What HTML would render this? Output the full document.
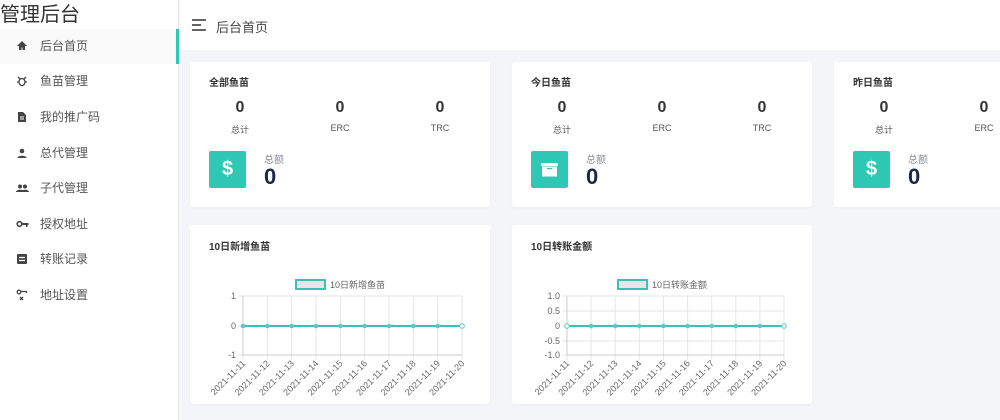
<!DOCTYPE html>
<html><head><meta charset="utf-8"><style>
*{margin:0;padding:0;box-sizing:border-box}
body{width:1000px;height:420px;overflow:hidden;background:#f4f5f9;font-family:"Liberation Sans","Noto Sans CJK SC",sans-serif;position:relative;color:#333}
.side{position:absolute;left:0;top:0;width:179px;height:420px;background:#fff;border-right:1px solid #e8e8e8}
.logo{position:absolute;left:0;top:2px;font-size:20px;color:#333;line-height:26px}
.item{position:absolute;left:0;width:179px;height:35px;font-size:12px;color:#555;line-height:35px}
.item.act{background:#fafafa;border-right:3px solid #2ec8b4}
.item span{position:absolute;left:40px}
.item svg{position:absolute;left:16px;top:11px}
.hdr{position:absolute;left:180px;top:0;width:820px;height:50px;background:#fff}
.card{position:absolute;background:#fff;border-radius:3px;box-shadow:0 1px 2px rgba(0,0,0,.04)}
.t{position:absolute;font-size:10px;font-weight:bold;color:#333}
.n{position:absolute;width:60px;text-align:center;font-size:16px;font-weight:bold;color:#333}
.l{position:absolute;width:60px;text-align:center;font-size:9px;color:#555}
.ib{position:absolute;width:37px;height:37px;background:#2ec8b4;border-radius:2px;color:#fff;font-weight:bold;font-size:20px;text-align:center;line-height:37px}
.zl{position:absolute;font-size:10px;color:#8a8f99}
.big{position:absolute;font-size:22px;font-weight:bold;color:#1c2748}
</style></head><body>
<div class="side">
<div class="logo">管理后台</div>
<div class="item act" style="top:29px"><svg width="12" height="12" viewBox="0 0 12 12"><path d="M6 1L1 6h2v4h2.5V7.5h1V10H9V6h2z" fill="#444"/></svg><span>后台首页</span></div>
<div class="item" style="top:64px"><svg width="12" height="12" viewBox="0 0 12 12"><g fill="none" stroke="#444" stroke-width="1.3"><ellipse cx="6" cy="7" rx="3" ry="3.5"/><path d="M2 2l2 2M10 2L8 4M1 7h2M9 7h2"/></g></svg><span>鱼苗管理</span></div>
<div class="item" style="top:100px"><svg width="12" height="12" viewBox="0 0 12 12"><path d="M2 1h5l3 3v7H2z" fill="#444"/><path d="M4 6h4M4 8h4" stroke="#fff"/></svg><span>我的推广码</span></div>
<div class="item" style="top:136px"><svg width="12" height="12" viewBox="0 0 12 12"><circle cx="6" cy="4" r="2.3" fill="#444"/><path d="M1.5 11c0-3 9-3 9 0z" fill="#444"/></svg><span>总代管理</span></div>
<div class="item" style="top:171px"><svg width="13" height="12" viewBox="0 0 13 12"><circle cx="4" cy="4.5" r="2" fill="#444"/><circle cx="9" cy="4.5" r="2" fill="#444"/><path d="M0 10c0-3 8-3 8 0zM5 10c0-3 8-3 8 0z" fill="#444"/></svg><span>子代管理</span></div>
<div class="item" style="top:207px"><svg width="13" height="12" viewBox="0 0 13 12"><circle cx="3.5" cy="6" r="2.3" fill="none" stroke="#444" stroke-width="1.6"/><path d="M5.5 5h7v2h-1v2h-1.5V7H5.5z" fill="#444"/></svg><span>授权地址</span></div>
<div class="item" style="top:242px"><svg width="12" height="12" viewBox="0 0 12 12"><rect x="1" y="1" width="10" height="10" rx="1" fill="#444"/><path d="M3 4.5h6M3 7.5h6" stroke="#fff" stroke-width="1.2"/></svg><span>转账记录</span></div>
<div class="item" style="top:278px"><svg width="12" height="12" viewBox="0 0 12 12"><circle cx="3" cy="3" r="1.8" fill="none" stroke="#444" stroke-width="1.3"/><path d="M4.5 2.5h6v1.5M4 8l3 3M7 8l-3 3" stroke="#444" stroke-width="1.3" fill="none"/></svg><span>地址设置</span></div>
</div>
<div class="hdr">
<svg style="position:absolute;left:12px;top:19px" width="15" height="12" viewBox="0 0 15 12"><path d="M0 1h14M0 6h9M0 11h14" stroke="#333" stroke-width="1.4"/></svg>
<div style="position:absolute;left:36px;top:17px;font-size:13px;color:#444">后台首页</div>
</div>

<div class="card" style="left:190px;top:62px;width:300px;height:145px">
<div class="t" style="left:19px;top:12px">全部鱼苗</div>
<div class="n" style="left:20px;top:37px">0</div><div class="n" style="left:120px;top:37px">0</div><div class="n" style="left:220px;top:37px">0</div>
<div class="l" style="left:20px;top:61px">总计</div><div class="l" style="left:120px;top:61px">ERC</div><div class="l" style="left:220px;top:61px">TRC</div>
<div class="ib" style="left:19px;top:89px">$</div>
<div class="zl" style="left:74px;top:89px">总额</div><div class="big" style="left:74px;top:102px">0</div>
</div>
<div class="card" style="left:512px;top:62px;width:300px;height:145px">
<div class="t" style="left:19px;top:12px">今日鱼苗</div>
<div class="n" style="left:20px;top:37px">0</div><div class="n" style="left:120px;top:37px">0</div><div class="n" style="left:220px;top:37px">0</div>
<div class="l" style="left:20px;top:61px">总计</div><div class="l" style="left:120px;top:61px">ERC</div><div class="l" style="left:220px;top:61px">TRC</div>
<div class="ib" style="left:19px;top:89px"><svg width="37" height="37" viewBox="0 0 37 37"><rect x="10" y="12" width="17" height="3" fill="#fff"/><rect x="11" y="15.5" width="15" height="10" fill="#fff"/><rect x="16" y="17" width="5" height="1.2" fill="#2ec8b4"/></svg></div>
<div class="zl" style="left:74px;top:89px">总额</div><div class="big" style="left:74px;top:102px">0</div>
</div>
<div class="card" style="left:834px;top:62px;width:200px;height:145px">
<div class="t" style="left:19px;top:12px">昨日鱼苗</div>
<div class="n" style="left:20px;top:37px">0</div><div class="n" style="left:120px;top:37px">0</div>
<div class="l" style="left:20px;top:61px">总计</div><div class="l" style="left:120px;top:61px">ERC</div>
<div class="ib" style="left:19px;top:89px">$</div>
<div class="zl" style="left:74px;top:89px">总额</div><div class="big" style="left:74px;top:102px">0</div>
</div>

<div class="card" style="left:190px;top:225px;width:300px;height:179px"><div class="t" style="left:19px;top:13px">10日新增鱼苗</div></div>
<div class="card" style="left:512px;top:225px;width:300px;height:179px"><div class="t" style="left:19px;top:13px">10日转账金额</div></div>

<svg style="position:absolute;left:0;top:0" width="1000" height="420" font-family="Liberation Sans,sans-serif" font-size="9" fill="#666">
<g>
<rect x="296" y="280" width="29" height="9" fill="#e6e6e6" stroke="#3cbfb6" stroke-width="2"/>
<text x="330" y="288" fill="#666">10日新增鱼苗</text>
<g stroke="#e6e6e6" stroke-width="1">
<path d="M243 296H462M243 326H462M243 355H462"/>
<path d="M243 296V360M267.3 296V360M291.7 296V360M316 296V360M340.3 296V360M364.7 296V360M389 296V360M413.3 296V360M437.7 296V360M462 296V360"/>
<path d="M238 296H243M238 326H243M238 355H243"/>
</g>
<path d="M243 296V355H462" stroke="#ccc" fill="none"/>
<text x="236" y="299" text-anchor="end">1</text><text x="236" y="329" text-anchor="end">0</text><text x="236" y="358" text-anchor="end">-1</text>
<path d="M243 326H462" stroke="#3cbfb6" stroke-width="2"/>
<g fill="#5cc9c0"><circle cx="243" cy="326" r="2.3"/><circle cx="267.3" cy="326" r="2.3"/><circle cx="291.7" cy="326" r="2.3"/><circle cx="316" cy="326" r="2.3"/><circle cx="340.3" cy="326" r="2.3"/><circle cx="364.7" cy="326" r="2.3"/><circle cx="389" cy="326" r="2.3"/><circle cx="413.3" cy="326" r="2.3"/><circle cx="437.7" cy="326" r="2.3"/><circle cx="462" cy="326" r="2.3" fill="#fff" stroke="#5cc9c0"/></g>
<g text-anchor="end">
<text transform="translate(246,364) rotate(-45)">2021-11-11</text><text transform="translate(270.3,364) rotate(-45)">2021-11-12</text><text transform="translate(294.7,364) rotate(-45)">2021-11-13</text><text transform="translate(319,364) rotate(-45)">2021-11-14</text><text transform="translate(343.3,364) rotate(-45)">2021-11-15</text><text transform="translate(367.7,364) rotate(-45)">2021-11-16</text><text transform="translate(392,364) rotate(-45)">2021-11-17</text><text transform="translate(416.3,364) rotate(-45)">2021-11-18</text><text transform="translate(440.7,364) rotate(-45)">2021-11-19</text><text transform="translate(465,364) rotate(-45)">2021-11-20</text>
</g>
</g>
<g>
<rect x="618" y="280" width="29" height="9" fill="#e6e6e6" stroke="#3cbfb6" stroke-width="2"/>
<text x="652" y="288" fill="#666">10日转账金额</text>
<g stroke="#e6e6e6" stroke-width="1">
<path d="M567 296H784M567 311H784M567 326H784M567 341H784M567 355H784"/>
<path d="M567 296V360M591.1 296V360M615.2 296V360M639.3 296V360M663.4 296V360M687.6 296V360M711.7 296V360M735.8 296V360M759.9 296V360M784 296V360"/>
<path d="M562 296H567M562 311H567M562 326H567M562 341H567M562 355H567"/>
</g>
<path d="M567 296V355H784" stroke="#ccc" fill="none"/>
<text x="560" y="299" text-anchor="end">1.0</text><text x="560" y="314" text-anchor="end">0.5</text><text x="560" y="329" text-anchor="end">0</text><text x="560" y="344" text-anchor="end">-0.5</text><text x="560" y="358" text-anchor="end">-1.0</text>
<path d="M567 326H784" stroke="#3cbfb6" stroke-width="2"/>
<g fill="#5cc9c0"><circle cx="567" cy="326" r="2.3" fill="#fff" stroke="#5cc9c0"/><circle cx="591.1" cy="326" r="2.3"/><circle cx="615.2" cy="326" r="2.3"/><circle cx="639.3" cy="326" r="2.3"/><circle cx="663.4" cy="326" r="2.3"/><circle cx="687.6" cy="326" r="2.3"/><circle cx="711.7" cy="326" r="2.3"/><circle cx="735.8" cy="326" r="2.3"/><circle cx="759.9" cy="326" r="2.3"/><circle cx="784" cy="326" r="2.3" fill="#fff" stroke="#5cc9c0"/></g>
<g text-anchor="end">
<text transform="translate(570,364) rotate(-45)">2021-11-11</text><text transform="translate(594.1,364) rotate(-45)">2021-11-12</text><text transform="translate(618.2,364) rotate(-45)">2021-11-13</text><text transform="translate(642.3,364) rotate(-45)">2021-11-14</text><text transform="translate(666.4,364) rotate(-45)">2021-11-15</text><text transform="translate(690.6,364) rotate(-45)">2021-11-16</text><text transform="translate(714.7,364) rotate(-45)">2021-11-17</text><text transform="translate(738.8,364) rotate(-45)">2021-11-18</text><text transform="translate(762.9,364) rotate(-45)">2021-11-19</text><text transform="translate(787,364) rotate(-45)">2021-11-20</text>
</g>
</g>
</svg>
</body></html>
